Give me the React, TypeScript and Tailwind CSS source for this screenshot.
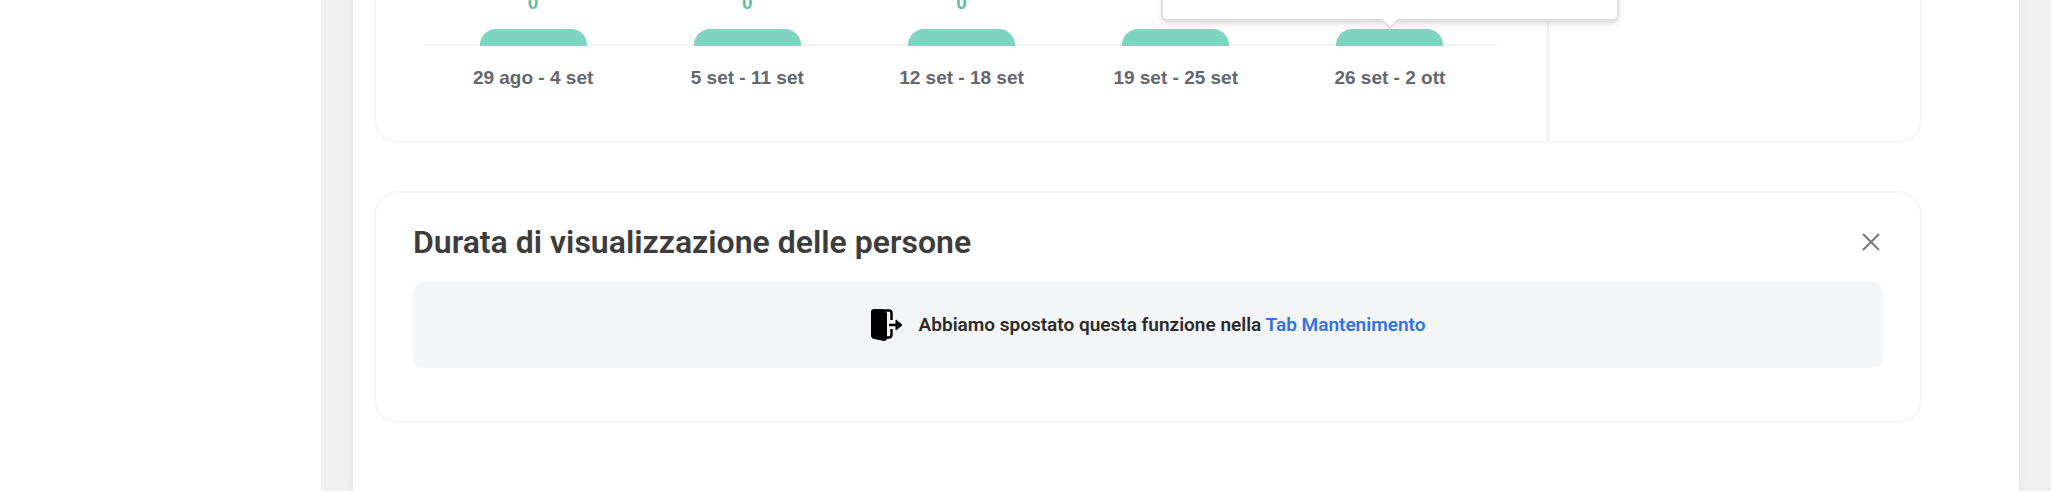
const weeks = [
  { label: '29 ago - 4 set', value: 0 },
  { label: '5 set - 11 set', value: 0 },
  { label: '12 set - 18 set', value: 0 },
  { label: '19 set - 25 set', value: 0 },
  { label: '26 set - 2 ott', value: 0 },
];

function DoorIcon() {
  return (
    <svg className="h-8 w-8 flex-shrink-0" viewBox="0 0 32 32" fill="none" aria-hidden="true">
      <path d="M4 1.500h14a2.500 2.500 0 0 1 2.500 2.500v7" stroke="#000" strokeWidth="2.500" />
      <path d="M20.500 20v6a2.500 2.500 0 0 1-2.500 2.500h-4" stroke="#000" strokeWidth="2.500" />
      <path d="M3 0h8l3 2a3 3 0 0 1 2 3v24a3 3 0 0 1-4 2.800L3 30a4 4 0 0 1-3-4V3a3 3 0 0 1 3-3z" fill="#000" />
      <path d="M18 16h9" stroke="#000" strokeWidth="2.500" />
      <path d="M25 11l6 5-6 5z" fill="#000" stroke="#000" strokeLinejoin="round" />
    </svg>
  );
}

function ChartCard() {
  return (
    <section className="-mt-[9px] flex rounded-b-3xl border-2 border-t-0 border-[#f6f6f6]">
      <div className="flex-1 px-[50px] pb-[51px]">
        <div className="grid grid-cols-5">
          {weeks.map((week, i) => (
            <div key={week.label} className="text-center text-[19px] leading-6 font-bold">
              <div className="text-[#5dbfa9]">{week.value}</div>
              <div className="relative mt-[14px] border-b-2 border-[#f2f2f2]">
                <div className="mx-auto -mb-0.5 h-[17px] w-1/2 rounded-t-2xl bg-[#7fd3c1]" />
                {i === weeks.length - 1 && (
                  <div className="absolute bottom-full left-1/2 z-10 mb-2 h-16 w-[458px] -translate-x-1/2 rounded-md border-2 border-[#dedede] bg-white shadow-md">
                    <div className="absolute -bottom-2 left-1/2 h-3 w-3 -translate-x-1/2 rotate-45 border-r-2 border-b-2 border-[#dedede] bg-white" />
                  </div>
                )}
              </div>
              <div className="mt-5 text-[#65676f]">{week.label}</div>
            </div>
          ))}
        </div>
      </div>
      <div className="w-[373px] border-l-2 border-[#f0f0f0]" />
    </section>
  );
}

function DurationCard() {
  return (
    <section className="mt-12 rounded-3xl border-2 border-[#f6f6f6] px-[37px] pt-[31px] pb-[53px] font-['Roboto',sans-serif]">
      <div className="flex items-center justify-between">
        <h2 className="text-[32px] leading-9 font-semibold text-[#3c3c3c]">
          Durata di visualizzazione delle persone
        </h2>
        <button type="button" aria-label="Chiudi" className="mr-0.5">
          <svg className="h-5 w-5" viewBox="0 0 20 20" stroke="#7a7a7a" strokeWidth="2" aria-hidden="true">
            <path d="M2 2l16 16M18 2L2 18" />
          </svg>
        </button>
      </div>
      <div className="mt-[22px] flex h-[86px] items-center justify-center gap-4 rounded-xl bg-[#f4f5f7]">
        <DoorIcon />
        <p className="text-[19px] leading-6 font-semibold text-[#2b2b2b]">
          Abbiamo spostato questa funzione nella{' '}
          <a href="#mantenimento" className="text-[#2f72ea]">
            Tab Mantenimento
          </a>
        </p>
      </div>
    </section>
  );
}

export default function App() {
  return (
    <div className="flex overflow-hidden bg-white pr-px font-['Liberation_Sans',sans-serif]">
      <aside className="w-[321px] flex-shrink-0" />
      <div className="flex-1 bg-[#f0f0f0] px-8">
        <main className="bg-[#fefefe] pr-[97px] pb-[68px] pl-[21px] shadow-[0_0_8px_rgba(0,0,0,0.08)]">
          <ChartCard />
          <DurationCard />
        </main>
      </div>
    </div>
  );
}
